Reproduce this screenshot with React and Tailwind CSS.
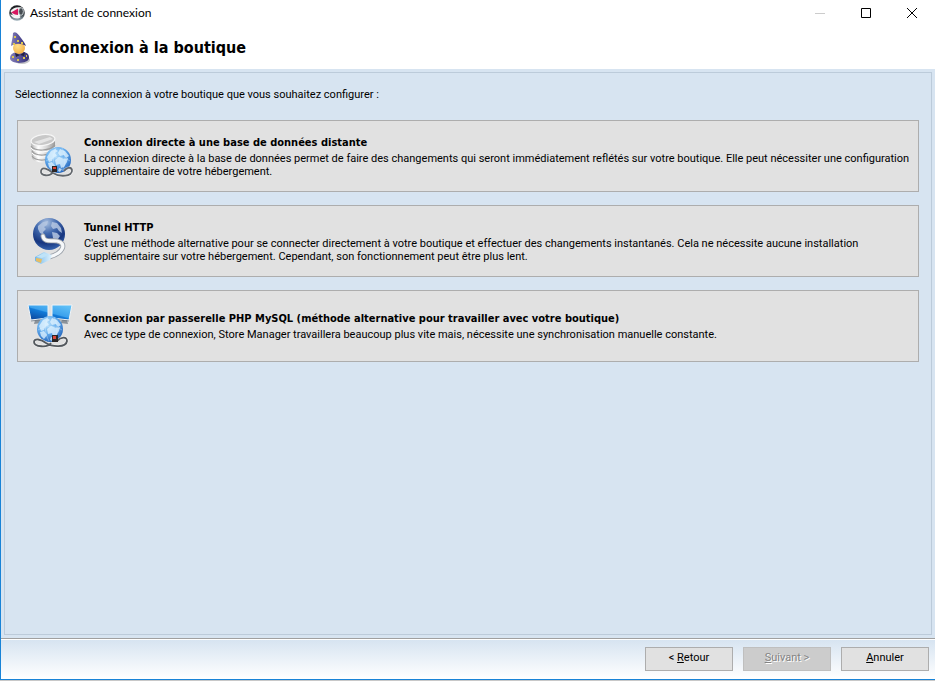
import React from "react";

const AppLogo = () => (
  <svg width="16" height="16" viewBox="0 0 16 16" className="shrink-0" aria-hidden="true">
    <defs>
      <linearGradient id="ring" x1="0" y1="0" x2="0" y2="1">
        <stop offset="0" stopColor="#16181b" />
        <stop offset=".6" stopColor="#3b4248" />
        <stop offset="1" stopColor="#9fb3bd" />
      </linearGradient>
    </defs>
    <circle cx="8" cy="8" r="7.8" fill="url(#ring)" />
    <path d="M1.5 6C4 2.500 8 1.500 12 2.500l1 5-3 5-6-2Z" fill="#f4f4f4" />
    <path d="M2 7.500 9 3.500 9 10 6 9.500Z" fill="#d6175f" />
    <path d="M1 9.500c3 0 6 2.500 10 1.800 1 .5.5 1.500-1 2-4 1-7-1-9-3.800Z" fill="#f3f5f6" />
    <ellipse cx="12" cy="6.500" rx="2.400" ry="3.800" fill="#454c52" stroke="#d5dcdf" strokeWidth=".9" />
  </svg>
);

const WizardIcon = () => (
  <svg width="22" height="34" viewBox="0 0 22 34" className="shrink-0" aria-hidden="true">
    <defs>
      <linearGradient id="hat" x1="0" x2="1">
        <stop offset="0" stopColor="#8580b8" />
        <stop offset=".6" stopColor="#504a92" />
        <stop offset="1" stopColor="#353070" />
      </linearGradient>
      <radialGradient id="face" cx=".4" cy=".35" r=".7">
        <stop offset="0" stopColor="#ffe08a" />
        <stop offset="1" stopColor="#f3b045" />
      </radialGradient>
    </defs>
    <ellipse cx="13" cy="29" rx="8" ry="4" fill="#c4c4c7" />
    <path d="M1 27c0-3 2-5 6-6l4-1 4 1c4 1 5 3 5 6 0 6-19 7-19 0Z" fill="url(#hat)" />
    <circle cx="10" cy="17" r="6" fill="url(#face)" />
    <path d="M4 2c3-2 5 1 8 5 2 3 4 5 5 8-5-3-10-3-15 0C2 12 4 7 4 2Z" fill="url(#hat)" />
    <path d="m6 22 5 2 5-3-1 4-4-1-4 2Z" fill="#24223f" />
    <path d="M5 5h2v2H5zM8 9h2v2H8zM4 12h2v2H4zM12 11h2v2h-2zM3 25h2v2H3zM14 26h2v2h-2zM8 28h2v2H8zM17 24h1v2h-1z" fill="#dcc650" />
  </svg>
);

const Globe = ({ cx, cy }) => (
  <g transform={`translate(${cx} ${cy})`}>
    <defs>
      <radialGradient id="globe" cx=".4" cy=".3" r=".75">
        <stop offset="0" stopColor="#b9e0fb" />
        <stop offset=".5" stopColor="#66aeee" />
        <stop offset="1" stopColor="#1d5fb8" />
      </radialGradient>
    </defs>
    <circle r="13" fill="url(#globe)" />
    <path d="m-11-3 4-6 4-2 3 2-3 2 2 3-4 2-1 3-3 1ZM2-11l5 2 4 5-3 2-2-3-4 1-2-3ZM-3 0l4-3 5 2 4-1-1 4-3 5-3 1-1-4-4 1ZM-10 3l4-1 3 4-3 4-3-3ZM1 8l3 1-2 3-2-1Z" fill="#e3f4ff" opacity=".75" />
    <path d="M-12 1C-6-3 5-4 12 1M-2-12C-6-4-5 5-1 12M4-12c4 7 4 16 0 23" fill="none" stroke="#e3f4ff" strokeWidth=".6" opacity=".6" />
  </g>
);

const DatabaseIcon = () => (
  <svg width="48" height="48" viewBox="0 0 48 48" className="shrink-0" aria-hidden="true">
    <defs>
      <linearGradient id="disk" x1="0" x2="1">
        <stop offset="0" stopColor="#b0b0b0" />
        <stop offset=".3" stopColor="#fff" />
        <stop offset=".65" stopColor="#d6d6d6" />
        <stop offset="1" stopColor="#999" />
      </linearGradient>
    </defs>
    <path d="M5 9 6 26c2 6 20 6 23 0V7Z" fill="url(#disk)" />
    <path d="M5 14c4 6 19 5 24-1M6 19c4 6 18 5 23-1M6 24c4 6 18 5 23-1" fill="none" stroke="#9c9c9c" strokeWidth="1.2" />
    <path d="M5 16c4 6 19 5 24-1M6 21c4 6 18 5 23-1" fill="none" stroke="#fff" strokeWidth="1" />
    <ellipse cx="17" cy="8" rx="12" ry="5.5" transform="rotate(-7 17 8)" fill="#c8c8c8" stroke="#f6f6f6" strokeWidth="1.2" />
    <path d="M8 10 24 5l3 2-14 5Z" fill="#ececec" opacity=".8" />
    <Globe cx={32} cy={28} />
    <path d="M27 40c-3 5-13 4-12-1 1-5 7-2 12 2 6 4 20 4 19-3-1-4-6-2-8 1" fill="none" stroke="#fff" strokeWidth="3" opacity=".5" />
    <path d="M27 40c-3 5-13 4-12-1 1-5 7-2 12 2 6 4 20 4 19-3-1-4-6-2-8 1" fill="none" stroke="#62676c" strokeWidth="1.8" />
    <path d="M26 34h5v6h-5z" fill="#2b2727" />
    <path d="M27 35h3v2h-3z" fill="#dc4638" />
  </svg>
);

const TunnelIcon = () => (
  <svg width="48" height="48" viewBox="0 0 48 48" className="shrink-0" aria-hidden="true">
    <defs>
      <radialGradient id="darkGlobe" cx=".42" cy=".15" r=".85">
        <stop offset="0" stopColor="#a9c0e0" />
        <stop offset=".4" stopColor="#4068ad" />
        <stop offset=".75" stopColor="#17367f" />
        <stop offset="1" stopColor="#3562ad" />
      </radialGradient>
      <linearGradient id="plug" x1="0" x2="1">
        <stop offset="0" stopColor="#6fb6ea" />
        <stop offset="1" stopColor="#e2f3fd" />
      </linearGradient>
    </defs>
    <circle cx="23" cy="17" r="16" fill="url(#darkGlobe)" />
    <path d="m12 9 5-4 5-1-1 4-3 2 2 2-3 3 1 3-4-2-2-4ZM26 5l5 1 4 5 1 5-3-2-2-3-4 1-2-3ZM26 15l5 1 3 3-4 6-3-4Z" fill="#b5c7e2" opacity=".85" />
    <path d="M17 19c1 7 9 4 14 5 10 2 7 12-8 16" fill="none" stroke="#9aa1aa" strokeWidth="5" strokeLinecap="round" />
    <path d="M17 19c1 7 9 4 14 5 10 2 7 12-8 16" fill="none" stroke="#f6f8fa" strokeWidth="3.200" strokeLinecap="round" />
    <path d="m9 40 9-5 8 3-2 5-9 4-6-3Z" fill="url(#plug)" />
    <path d="m10 41 6 1-1 4-5-2Z" fill="#e8bd62" />
    <path d="m10 40 8-4 5 2-7 3Z" fill="#bfe3f8" />
  </svg>
);

const GatewayIcon = () => (
  <svg width="48" height="48" viewBox="0 0 48 48" className="shrink-0" aria-hidden="true">
    <defs>
      <linearGradient id="screen" x1="0" y1="1" x2=".8" y2="0">
        <stop offset="0" stopColor="#0b3f94" />
        <stop offset=".5" stopColor="#137bd8" />
        <stop offset=".55" stopColor="#3ba1ed" />
        <stop offset="1" stopColor="#5fc0f7" />
      </linearGradient>
    </defs>
    <path d="m9 18 4-1 3 4-8 1ZM37 17l4 1 1 4-8-1Z" fill="#8b9299" />
    <path d="M2 3h20v13L5 18ZM26 3h20l-3 15-17-2Z" fill="url(#screen)" stroke="#eef3f7" />
    <path d="M5 19l17-2M43 19l-17-2" stroke="#707b86" strokeWidth=".8" />
    <Globe cx={24} cy={27} />
    <path d="M25 41c-3 5-17 4-17-1 0-4 7-3 12 1 6 4 20 5 21-2 0-5-6-4-10 0" fill="none" stroke="#fff" strokeWidth="3" opacity=".5" />
    <path d="M25 41c-3 5-17 4-17-1 0-4 7-3 12 1 6 4 20 5 21-2 0-5-6-4-10 0" fill="none" stroke="#53585d" strokeWidth="1.8" />
    <path d="M26 33h6v7h-6z" fill="#2b2727" />
    <path d="M27 34h3v3h-3z" fill="#dc4638" />
  </svg>
);

const connections = [
  {
    icon: DatabaseIcon,
    title: "Connexion directe à une base de données distante",
    text: "La connexion directe à la base de données permet de faire des changements qui seront immédiatement reflétés sur votre boutique. Elle peut nécessiter une configuration supplémentaire de votre hébergement.",
  },
  {
    icon: TunnelIcon,
    title: "Tunnel HTTP",
    text: "C'est une méthode alternative pour se connecter directement à votre boutique et effectuer des changements instantanés. Cela ne nécessite aucune installation supplémentaire sur votre hébergement. Cependant, son fonctionnement peut être plus lent.",
  },
  {
    icon: GatewayIcon,
    title: "Connexion par passerelle PHP MySQL (méthode alternative pour travailler avec votre boutique)",
    text: "Avec ce type de connexion, Store Manager travaillera beaucoup plus vite mais, nécessite une synchronisation manuelle constante.",
  },
];

const App = () => {
  return (
    <div className="min-h-screen flex flex-col bg-[#c8c8c8] pb-px font-['Roboto',sans-serif] text-[11px] text-black">
      <div className="flex-1 flex flex-col border-l border-b border-[#1883d7] bg-white">
        {/* Title bar */}
        <header>
          <div className="h-[26px] flex items-center gap-[5px] pl-2">
            <AppLogo />
            <span className="text-[12px] font-['Lato',sans-serif]">Assistant de connexion</span>
            <div className="ml-auto flex h-full">
              <button aria-label="Réduire" disabled className="w-[46px] flex items-center justify-center">
                <svg width="10" height="10" viewBox="0 0 10 10"><path d="M0 5.5h10" stroke="#ccc" /></svg>
              </button>
              <button aria-label="Agrandir" className="w-[46px] flex items-center justify-center">
                <svg width="10" height="10" viewBox="0 0 10 10"><path d="M.5.5h9v9h-9z" fill="none" stroke="#000" /></svg>
              </button>
              <button aria-label="Fermer" className="w-[46px] flex items-center justify-center">
                <svg width="10" height="10" viewBox="0 0 10 10"><path d="m0 0 10 10M10 0 0 10" stroke="#000" /></svg>
              </button>
            </div>
          </div>
          <div className="h-[43px] flex items-center gap-[18px] pl-2">
            <WizardIcon />
            <h1 className="text-[16px] font-bold font-['DejaVu_Sans_Condensed','DejaVu_Sans',sans-serif]">Connexion à la boutique</h1>
          </div>
        </header>

        {/* Connection choices */}
        <main className="flex-1 flex flex-col bg-[#d7e4f1] p-[3px] border-b border-[#a0a0a0]">
          <section className="flex-1 border border-[#bccbda] px-[10px] pt-3">
            <p className="leading-5">Sélectionnez la connexion à votre boutique que vous souhaitez configurer :</p>
            <div className="mt-[15px] mx-[2px] flex flex-col gap-[13px]">
              {connections.map(({ icon: Icon, title, text }) => (
                <button key={title} className="min-h-[72px] w-full flex items-center gap-[10px] bg-[#e1e1e1] border border-[#adadad] px-2 text-left">
                  <Icon />
                  <span className="pb-px leading-[13px]">
                    <span className="block font-bold leading-[18px] font-['DejaVu_Sans_Condensed','DejaVu_Sans',sans-serif]">{title}</span>
                    <span className="block">{text}</span>
                  </span>
                </button>
              ))}
            </div>
          </section>
        </main>

        {/* Wizard navigation */}
        <footer className="h-10 flex items-center justify-end gap-[10px] border-t border-white bg-linear-to-b from-[#d7e4f1] to-white pr-[6px] pb-[2px]">
          <button className="w-[88px] h-6 bg-[#e1e1e1] border border-[#adadad]">&lt; <u>R</u>etour</button>
          <button disabled className="w-[88px] h-6 bg-[#cccccc] border border-[#bfbfbf] text-[#838383] text-shadow-[1px_1px_0_#fff]"><u>S</u>uivant &gt;</button>
          <button className="w-[88px] h-6 bg-[#e1e1e1] border border-[#adadad]"><u>A</u>nnuler</button>
        </footer>
      </div>
    </div>
  );
};

export default App;
